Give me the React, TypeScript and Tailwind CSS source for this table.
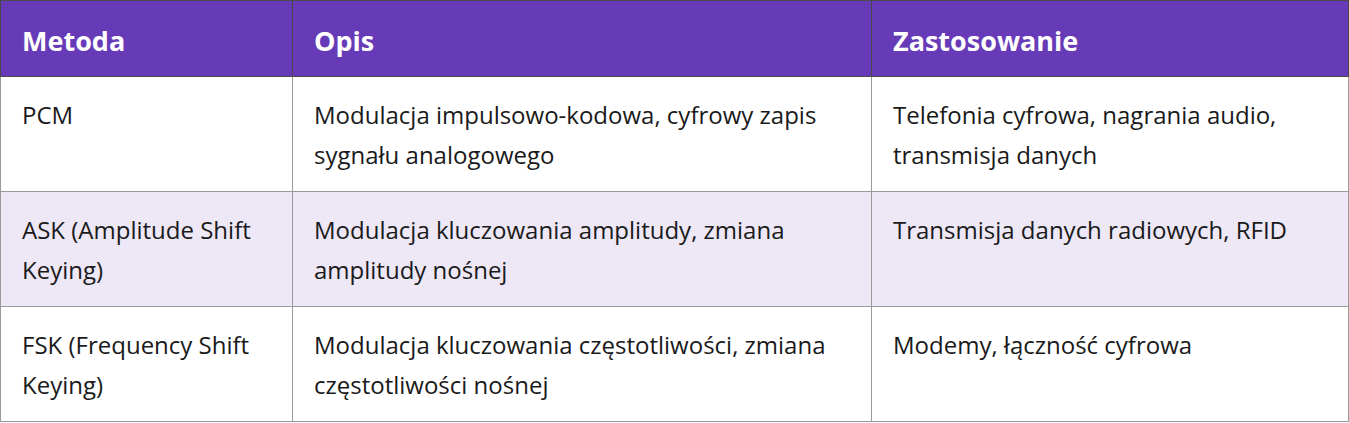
const rows = [
  {
    metoda: "PCM",
    opis: "Modulacja impulsowo-kodowa, cyfrowy zapis sygnału analogowego",
    zastosowanie: "Telefonia cyfrowa, nagrania audio, transmisja danych",
  },
  {
    metoda: "ASK (Amplitude Shift Keying)",
    opis: "Modulacja kluczowania amplitudy, zmiana amplitudy nośnej",
    zastosowanie: "Transmisja danych radiowych, RFID",
  },
  {
    metoda: "FSK (Frequency Shift Keying)",
    opis: "Modulacja kluczowania częstotliwości, zmiana częstotliwości nośnej",
    zastosowanie: "Modemy, łączność cyfrowa",
  },
];

export default function App() {
  return (
    <div className="bg-white font-['Open_Sans',sans-serif]">
      <table className="w-[1349px] table-fixed border-collapse">
        <colgroup>
          <col className="w-[292px]" />
          <col className="w-[579px]" />
          <col />
        </colgroup>
        <thead>
          <tr className="bg-[#673ab7] text-white">
            <th className="border border-[#4a4a4a] px-[21px] pt-[20px] pb-[16px] text-left text-[27px] font-bold leading-[39px]">
              Metoda
            </th>
            <th className="border border-[#4a4a4a] px-[21px] pt-[20px] pb-[16px] text-left text-[27px] font-bold leading-[39px]">
              Opis
            </th>
            <th className="border border-[#4a4a4a] px-[21px] pt-[20px] pb-[16px] text-left text-[27px] font-bold leading-[39px]">
              Zastosowanie
            </th>
          </tr>
        </thead>
        <tbody>
          {rows.map((row, i) => (
            <tr key={i} className={i % 2 === 1 ? "bg-[#ede7f6]" : "bg-white"}>
              <td className="border border-[#9a9a9a] px-[21px] pt-[18px] pb-[16px] align-top text-[24px] leading-[40px] text-[#1a1a1a]">
                {row.metoda}
              </td>
              <td className="border border-[#9a9a9a] px-[21px] pt-[18px] pb-[16px] align-top text-[24px] leading-[40px] text-[#1a1a1a]">
                {row.opis}
              </td>
              <td className="border border-[#9a9a9a] px-[21px] pt-[18px] pb-[16px] align-top text-[24px] leading-[40px] text-[#1a1a1a]">
                {row.zastosowanie}
              </td>
            </tr>
          ))}
        </tbody>
      </table>
    </div>
  );
}
